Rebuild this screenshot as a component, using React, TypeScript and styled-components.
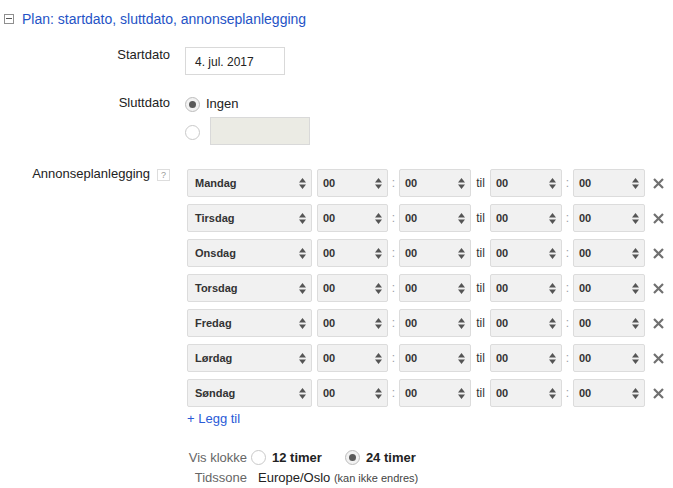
import React from "react";
import styled, { createGlobalStyle } from "styled-components";

const GlobalStyle = createGlobalStyle`
  body {
    margin: 0;
    background: #fff;
    font-family: "Liberation Sans", Arial, sans-serif;
    font-size: 13px;
    color: #222;
  }
`;

const days = ["Mandag", "Tirsdag", "Onsdag", "Torsdag", "Fredag", "Lørdag", "Søndag"];

const Page = styled.div`
  width: 673px;
  height: 488px;
  padding-top: 11px;
  box-sizing: border-box;
`;

const Header = styled.div`
  display: flex;
  align-items: center;
  height: 16px;
  padding-left: 4px;
`;

const ToggleBox = styled.span`
  width: 10px;
  height: 10px;
  border: 1px solid #8f8f8f;
  box-sizing: border-box;
  display: flex;
  align-items: center;
  justify-content: center;
  margin-right: 8px;
  margin-top: -1px;

  &::after {
    content: "";
    width: 6px;
    height: 1px;
    background: #555;
  }
`;

const HeaderLink = styled.span`
  font-size: 14px;
  line-height: 16px;
  color: #2553c6;
`;

const Form = styled.div`
  display: grid;
  grid-template-columns: 170px 1fr;
  column-gap: 15px;
  row-gap: 20px;
  margin-top: 20px;
`;

const Label = styled.div<{ $pad?: number }>`
  text-align: right;
  line-height: 15px;
  padding-top: ${(p) => p.$pad ?? 0}px;
  color: #222;
  display: flex;
  justify-content: flex-end;
  align-items: flex-start;
`;

const Help = styled.span`
  width: 13px;
  height: 12px;
  margin-left: 7px;
  margin-top: 3px;
  border: 1px solid #ddd;
  box-sizing: border-box;
  font-size: 9px;
  line-height: 10px;
  color: #999;
  text-align: center;
`;

const Field = styled.div`
  display: flex;
  flex-direction: column;
  align-items: flex-start;
`;

const DateInput = styled.div`
  width: 100px;
  height: 28px;
  border: 1px solid #d9d9d9;
  box-sizing: border-box;
  padding-left: 9px;
  font-size: 12px;
  line-height: 28px;
  color: #222;
`;

const RadioRow = styled.div<{ $h?: number; $mt?: number }>`
  display: flex;
  align-items: center;
  gap: 6px;
  height: ${(p) => p.$h ?? 15}px;
  margin-top: ${(p) => p.$mt ?? 0}px;
  line-height: 15px;
`;

const Radio = styled.span<{ $checked?: boolean; $mt?: number }>`
  width: 15px;
  height: 15px;
  border-radius: 50%;
  border: 1px solid ${(p) => (p.$checked ? "#bdbdbd" : "#c9c9c9")};
  background: ${(p) => (p.$checked ? "#f2f2f2" : "#fff")};
  box-sizing: border-box;
  display: flex;
  align-items: center;
  justify-content: center;
  flex-shrink: 0;
  margin-top: ${(p) => p.$mt ?? 0}px;

  &::after {
    content: "";
    width: 7px;
    height: 7px;
    border-radius: 50%;
    background: ${(p) => (p.$checked ? "#5a5a5a" : "transparent")};
  }
`;

const DisabledBox = styled.div`
  width: 100px;
  height: 28px;
  background: #ebebe4;
  border: 1px solid #d9d9d9;
  box-sizing: border-box;
  margin-left: 4px;
`;

const Schedule = styled.div`
  display: flex;
  flex-direction: column;
  gap: 7px;
  margin-top: 4px;
  margin-left: 2px;
`;

const Row = styled.div`
  display: flex;
  align-items: center;
  height: 28px;
`;

const Select = styled.div<{ $w: number; $pad?: number; $mr?: number }>`
  width: ${(p) => p.$w}px;
  height: 28px;
  background: #f1f1f1;
  border: 1px solid #dcdcdc;
  border-radius: 2px;
  box-sizing: border-box;
  display: flex;
  align-items: center;
  justify-content: space-between;
  padding: 0 5px 0 ${(p) => p.$pad ?? 5}px;
  margin-right: ${(p) => p.$mr ?? 0}px;
  font-size: 11px;
  font-weight: bold;
  color: #333;
`;

const Sep = styled.span<{ $w: number; $muted?: boolean }>`
  width: ${(p) => p.$w}px;
  text-align: center;
  font-size: 12px;
  color: ${(p) => (p.$muted ? "#9aa0a8" : "#333")};
`;

const Remove = styled.span`
  margin-left: 8px;
  display: flex;
`;

const AddLink = styled.div`
  margin-top: 4px;
  margin-left: 2px;
  line-height: 15px;
  color: #2a5bd7;
`;

const Settings = styled.div`
  display: grid;
  grid-template-columns: 60px auto;
  column-gap: 4px;
  grid-auto-rows: 20px;
  margin-top: 21px;
  margin-left: 2px;
  align-items: center;
`;

const SetLabel = styled.span`
  text-align: right;
  color: #666;
`;

const Choices = styled.div`
  display: flex;
  align-items: center;
`;

const Choice = styled.span<{ $gap?: number }>`
  display: flex;
  align-items: center;
  gap: 6px;
  margin-left: ${(p) => p.$gap ?? 0}px;
  font-weight: bold;
  color: #222;
`;

const Zone = styled.span`
  padding-left: 7px;
  color: #222;
`;

const Note = styled.span`
  font-size: 11px;
  color: #444;
`;

function Arrows() {
  return (
    <svg width="7" height="11" viewBox="0 0 7 11">
      <path d="M0 4.5 L3.5 0 L7 4.5 Z M0 6.5 L7 6.5 L3.5 11 Z" fill="#555" />
    </svg>
  );
}

function Cross() {
  return (
    <svg width="11" height="11" viewBox="0 0 11 11">
      <path d="M1 1 L10 10 M10 1 L1 10" stroke="#707070" strokeWidth="2.2" />
    </svg>
  );
}

function TimeSelect({ w }: { w: number }) {
  return (
    <Select $w={w} $pad={5}>
      <span>00</span>
      <Arrows />
    </Select>
  );
}

export default function App() {
  return (
    <Page>
      <GlobalStyle />
      <Header>
        <ToggleBox />
        <HeaderLink>Plan: startdato, sluttdato, annonseplanlegging</HeaderLink>
      </Header>
      <Form>
        <Label>Startdato</Label>
        <Field>
          <DateInput>4. jul. 2017</DateInput>
        </Field>

        <Label>Sluttdato</Label>
        <Field>
          <RadioRow $h={17}>
            <Radio $checked $mt={2} />
            <span>Ingen</span>
          </RadioRow>
          <RadioRow $h={28} $mt={5}>
            <Radio $mt={2} />
            <DisabledBox />
          </RadioRow>
        </Field>

        <Label $pad={1}>
          Annonseplanlegging
          <Help>?</Help>
        </Label>
        <Field>
          <Schedule>
            {days.map((d) => (
              <Row key={d}>
                <Select $w={125} $pad={7} $mr={5}>
                  <span>{d}</span>
                  <Arrows />
                </Select>
                <TimeSelect w={71} />
                <Sep $w={11} $muted>:</Sep>
                <TimeSelect w={72} />
                <Sep $w={19}>til</Sep>
                <TimeSelect w={72} />
                <Sep $w={11} $muted>:</Sep>
                <TimeSelect w={72} />
                <Remove>
                  <Cross />
                </Remove>
              </Row>
            ))}
          </Schedule>
          <AddLink>+ Legg til</AddLink>
          <Settings>
            <SetLabel>Vis klokke</SetLabel>
            <Choices>
              <Choice>
                <Radio />
                12 timer
              </Choice>
              <Choice $gap={23}>
                <Radio $checked />
                24 timer
              </Choice>
            </Choices>
            <SetLabel>Tidssone</SetLabel>
            <Zone>
              Europe/Oslo <Note>(kan ikke endres)</Note>
            </Zone>
          </Settings>
        </Field>
      </Form>
    </Page>
  );
}
